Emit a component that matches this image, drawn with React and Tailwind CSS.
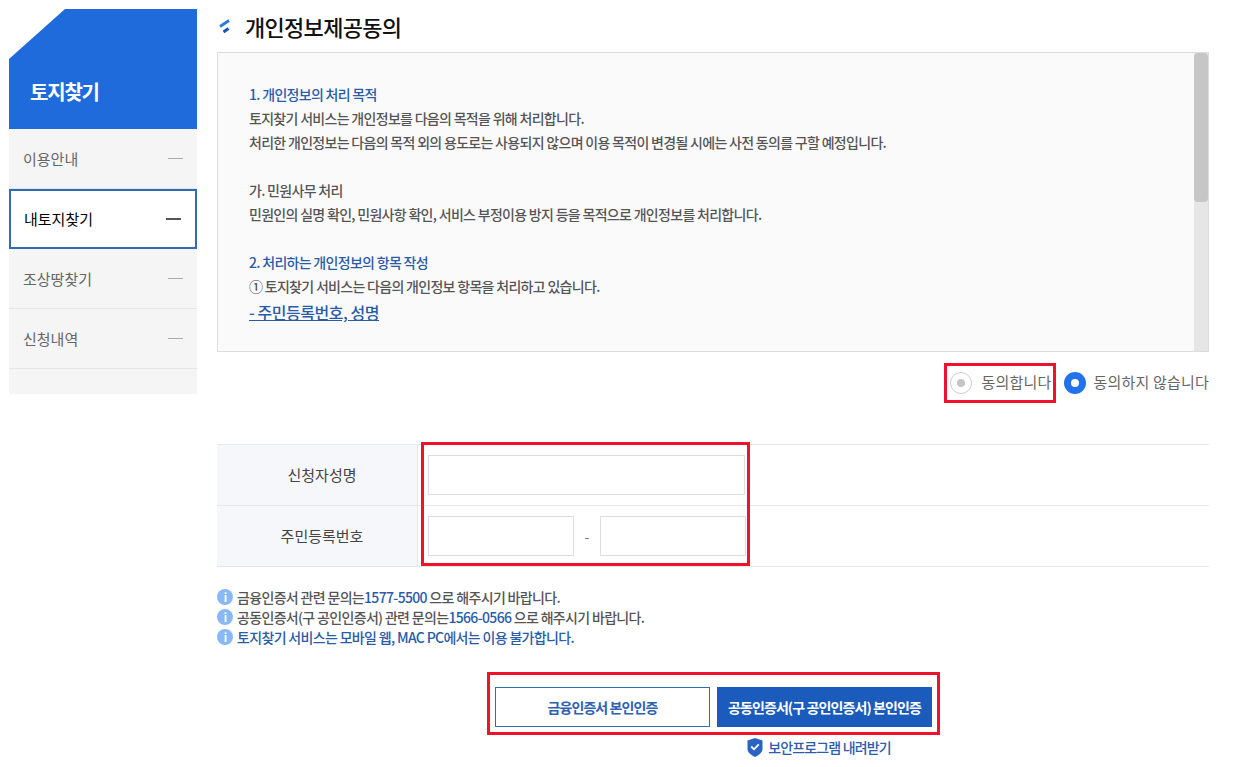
const font = { fontFamily: '"Noto Sans CJK KR", "Noto Sans", sans-serif' };

const menus = [
  { name: '이용안내' },
  { name: '내토지찾기', active: true },
  { name: '조상땅찾기' },
  { name: '신청내역' },
];

function InfoIcon() {
  return (
    <span className="mr-[4px] flex h-[16px] w-[16px] shrink-0 items-center justify-center rounded-full bg-[#8ab8f5] text-[11px] font-bold leading-none text-white">
      i
    </span>
  );
}

function Sidebar() {
  return (
    <aside className="w-[188px] shrink-0">
      <div className="flex h-[120px] items-end bg-[#1f6bdb] pb-[22px] pl-[21px] text-[20px] font-bold leading-[30px] tracking-[-1.2px] text-white [clip-path:polygon(56px_0,100%_0,100%_100%,0_100%,0_50px)]">
        토지찾기
      </div>
      <ul className="bg-[#f5f5f5] pb-[25px]">
        {menus.map((menu) =>
          menu.active ? (
            <li
              key={menu.name}
              className="flex h-[60px] items-center justify-between border-2 border-[#2f6cb5] bg-white pl-[13px] pr-[14px] pt-[1px] text-[15px] text-black"
            >
              {menu.name}
              <span className="mb-[2px] h-[2px] w-[15px] bg-[#555555]" />
            </li>
          ) : (
            <li
              key={menu.name}
              className="flex h-[60px] items-center justify-between border-b border-[#e6e6e6] pl-[14px] pr-[14px] pt-[2px] text-[15px] text-[#666666]"
            >
              {menu.name}
              <span className="mb-[2px] h-px w-[15px] bg-[#aaaaaa]" />
            </li>
          ),
        )}
      </ul>
    </aside>
  );
}

function Terms() {
  return (
    <div className="flex h-[300px] overflow-hidden border border-[#dddddd] bg-[#fafafa]">
      <div className="flex-1 pl-[31px] pt-[29px] text-[14px] font-medium leading-[24px] tracking-[-0.7px] text-[#555555]">
        <p className="text-[#2a5ba8]">1. 개인정보의 처리 목적</p>
        <p>토지찾기 서비스는 개인정보를 다음의 목적을 위해 처리합니다.</p>
        <p>처리한 개인정보는 다음의 목적 외의 용도로는 사용되지 않으며 이용 목적이 변경될 시에는 사전 동의를 구할 예정입니다.</p>
        <p className="mt-[24px]">가. 민원사무 처리</p>
        <p>민원인의 실명 확인, 민원사항 확인, 서비스 부정이용 방지 등을 목적으로 개인정보를 처리합니다.</p>
        <p className="mt-[24px] text-[#2a5ba8]">2. 처리하는 개인정보의 항목 작성</p>
        <p>① 토지찾기 서비스는 다음의 개인정보 항목을 처리하고 있습니다.</p>
        <p className="mt-[2px] text-[16px] tracking-[-0.45px] text-[#2a5ba8] underline">- 주민등록번호, 성명</p>
      </div>
      <div className="w-[14px] shrink-0 bg-[#e6e6e6]">
        <div className="h-[149px] rounded-[4px] bg-[#c6c6c6]" />
      </div>
    </div>
  );
}

function Agreement() {
  return (
    <div className="mt-[20px] flex h-[22px] items-center justify-end text-[15px] tracking-[0.2px] text-[#666666]">
      <div className="relative flex items-center">
        <span className="mr-[9px] flex h-[22px] w-[22px] items-center justify-center rounded-full border border-[#cccccc] bg-white">
          <span className="h-[8px] w-[8px] rounded-full bg-[#c4c4c4]" />
        </span>
        <span className="mt-[-2px]">동의합니다</span>
        <div className="absolute left-[-6px] top-[-9px] h-[40px] w-[112px] border-[3px] border-[#f0112d]" />
      </div>
      <span className="ml-[13px] mr-[7px] flex h-[22px] w-[22px] items-center justify-center rounded-full bg-[#2272eb]">
        <span className="h-[8px] w-[8px] rounded-full bg-white" />
      </span>
      <span className="mt-[-2px]">동의하지 않습니다</span>
    </div>
  );
}

function ApplicantForm() {
  return (
    <div className="relative mt-[50px] border-y border-[#e6e6e6] text-[15px] text-[#444444]">
      <div className="flex h-[61px] border-b border-[#e6e6e6]">
        <div className="flex w-[201px] items-center justify-center border-r border-[#e6e6e6] bg-[#f5f7fb] pl-[10px]">신청자성명</div>
        <div className="flex items-center pl-[10px]">
          <div className="h-[40px] w-[317px] border border-[#dddddd] bg-white" />
        </div>
      </div>
      <div className="flex h-[60px]">
        <div className="flex w-[201px] items-center justify-center border-r border-[#e6e6e6] bg-[#f5f7fb] pl-[10px]">주민등록번호</div>
        <div className="flex items-center pl-[10px]">
          <div className="h-[40px] w-[146px] border border-[#dddddd] bg-white" />
          <span className="w-[26px] text-center text-[14px] text-[#777777]">-</span>
          <div className="h-[40px] w-[146px] border border-[#dddddd] bg-white" />
        </div>
      </div>
      <div className="absolute left-[204px] top-[-3px] h-[124px] w-[329px] border-[3px] border-[#f0112d]" />
    </div>
  );
}

function Notices() {
  return (
    <ul className="mt-[20px] text-[14px] font-medium leading-[20px] tracking-[-0.67px] text-[#555555]">
      <li className="flex items-center">
        <InfoIcon />
        <span>
          금융인증서 관련 문의는<span className="text-[#2a5ba8]">1577-5500</span> 으로 해주시기 바랍니다.
        </span>
      </li>
      <li className="flex items-center">
        <InfoIcon />
        <span>
          공동인증서(구 공인인증서) 관련 문의는<span className="text-[#2a5ba8]">1566-0566</span> 으로 해주시기 바랍니다.
        </span>
      </li>
      <li className="flex items-center text-[#2a5ba8]">
        <InfoIcon />
        토지찾기 서비스는 모바일 웹, MAC PC에서는 이용 불가합니다.
      </li>
    </ul>
  );
}

function Buttons() {
  return (
    <div className="mt-[40px] flex flex-col items-center">
      <div className="relative ml-[1px] flex gap-[7px] text-[14px] font-bold tracking-[-0.9px]">
        <button className="h-[40px] w-[215px] border border-[#2f6cb0] bg-white text-[#2d62b0]">금융인증서 본인인증</button>
        <button className="h-[40px] w-[215px] bg-[#1a5bbb] text-white">공동인증서(구 공인인증서) 본인인증</button>
        <div className="absolute left-[-8px] top-[-15px] h-[63px] w-[453px] border-[3px] border-[#f0112d]" />
      </div>
      <div className="ml-[212px] mt-[10px] flex items-center text-[14px] font-medium tracking-[-0.85px] text-[#2d5cae]">
        <svg width="16" height="19" viewBox="0 0 16 19" className="mr-[5px]">
          <path d="M0.500 2.500 8 0l7.500 2.500V11c0 3.500-3.500 6-7.500 8-4-2-7.500-4.500-7.500-8Z" fill="#2a63c4" />
          <path d="m4.200 8.500 2.800 2.800 4.800-5" fill="none" stroke="#ffffff" strokeWidth="1.800" />
        </svg>
        보안프로그램 내려받기
      </div>
    </div>
  );
}

export default function App() {
  return (
    <div style={font} className="flex h-[767px] w-[1234px] items-start gap-[20px] overflow-hidden bg-white pl-[9px] pt-[9px]">
      <Sidebar />
      <main className="w-[992px]">
        <div className="flex h-[43px] items-center pb-[8px]">
          <svg width="12" height="16" viewBox="0 0 12 16" className="ml-[2px] mr-[14px]">
            <path d="M1 7.500 10 1.500" fill="none" stroke="#2e7be0" strokeWidth="3" />
            <path d="M4.500 13 9.500 9.500" fill="none" stroke="#1a55b0" strokeWidth="3" />
          </svg>
          <h1 className="text-[22px] font-medium tracking-[-0.7px] text-[#111111]">개인정보제공동의</h1>
        </div>
        <Terms />
        <Agreement />
        <ApplicantForm />
        <Notices />
        <Buttons />
      </main>
    </div>
  );
}
